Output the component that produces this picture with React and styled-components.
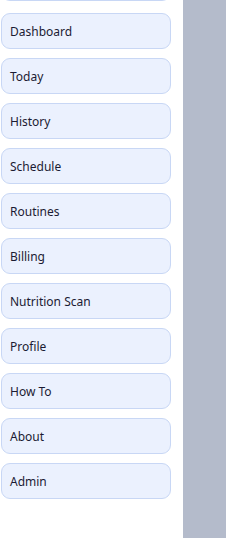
import React from 'react';
import styled, {createGlobalStyle} from "styled-components";

const GlobalStyle = createGlobalStyle`
  html, body {
    margin: 0;
    padding: 0;
    background: #ffffff;
  }
  #root {
    height: 538px;
  }
`

const Layout = styled.div`
  display: flex;
  flex-direction: row;
  height: 538px;
  overflow: hidden;
  font-family: "Noto Sans", "Open Sans", sans-serif;
`

const Sidebar = styled.nav`
  width: 183px;
  flex-shrink: 0;
  background: #ffffff;
  overflow: hidden;
`

const MenuList = styled.div`
  display: flex;
  flex-direction: column;
  gap: 9px;
  padding: 0 12px 0 1px;
  margin-top: -35px;
`

const MenuItem = styled.div`
  height: 36px;
  box-sizing: border-box;
  display: flex;
  align-items: center;
  padding: 0 8px;
  background: #ebf1fe;
  border: 1px solid #c8d7f5;
  border-radius: 9px;
  font-size: 12px;
  color: #1b1b33;
  cursor: pointer;
  ${props => props.first ? 'margin-bottom: 3px;' : ''}
`

const Backdrop = styled.div`
  flex: 1;
  background: #b4bbcb;
`

const items = [
    'Dashboard', 'Today', 'History', 'Schedule', 'Routines', 'Billing',
    'Nutrition Scan', 'Profile', 'How To', 'About', 'Admin'
]

const App = () => {
    return (
        <>
            <GlobalStyle/>
            <Layout>
                <Sidebar>
                    <MenuList>
                        <MenuItem first/>
                        {items.map((name) => <MenuItem key={name}>{name}</MenuItem>)}
                    </MenuList>
                </Sidebar>
                <Backdrop/>
            </Layout>
        </>
    );
}

export default App;
